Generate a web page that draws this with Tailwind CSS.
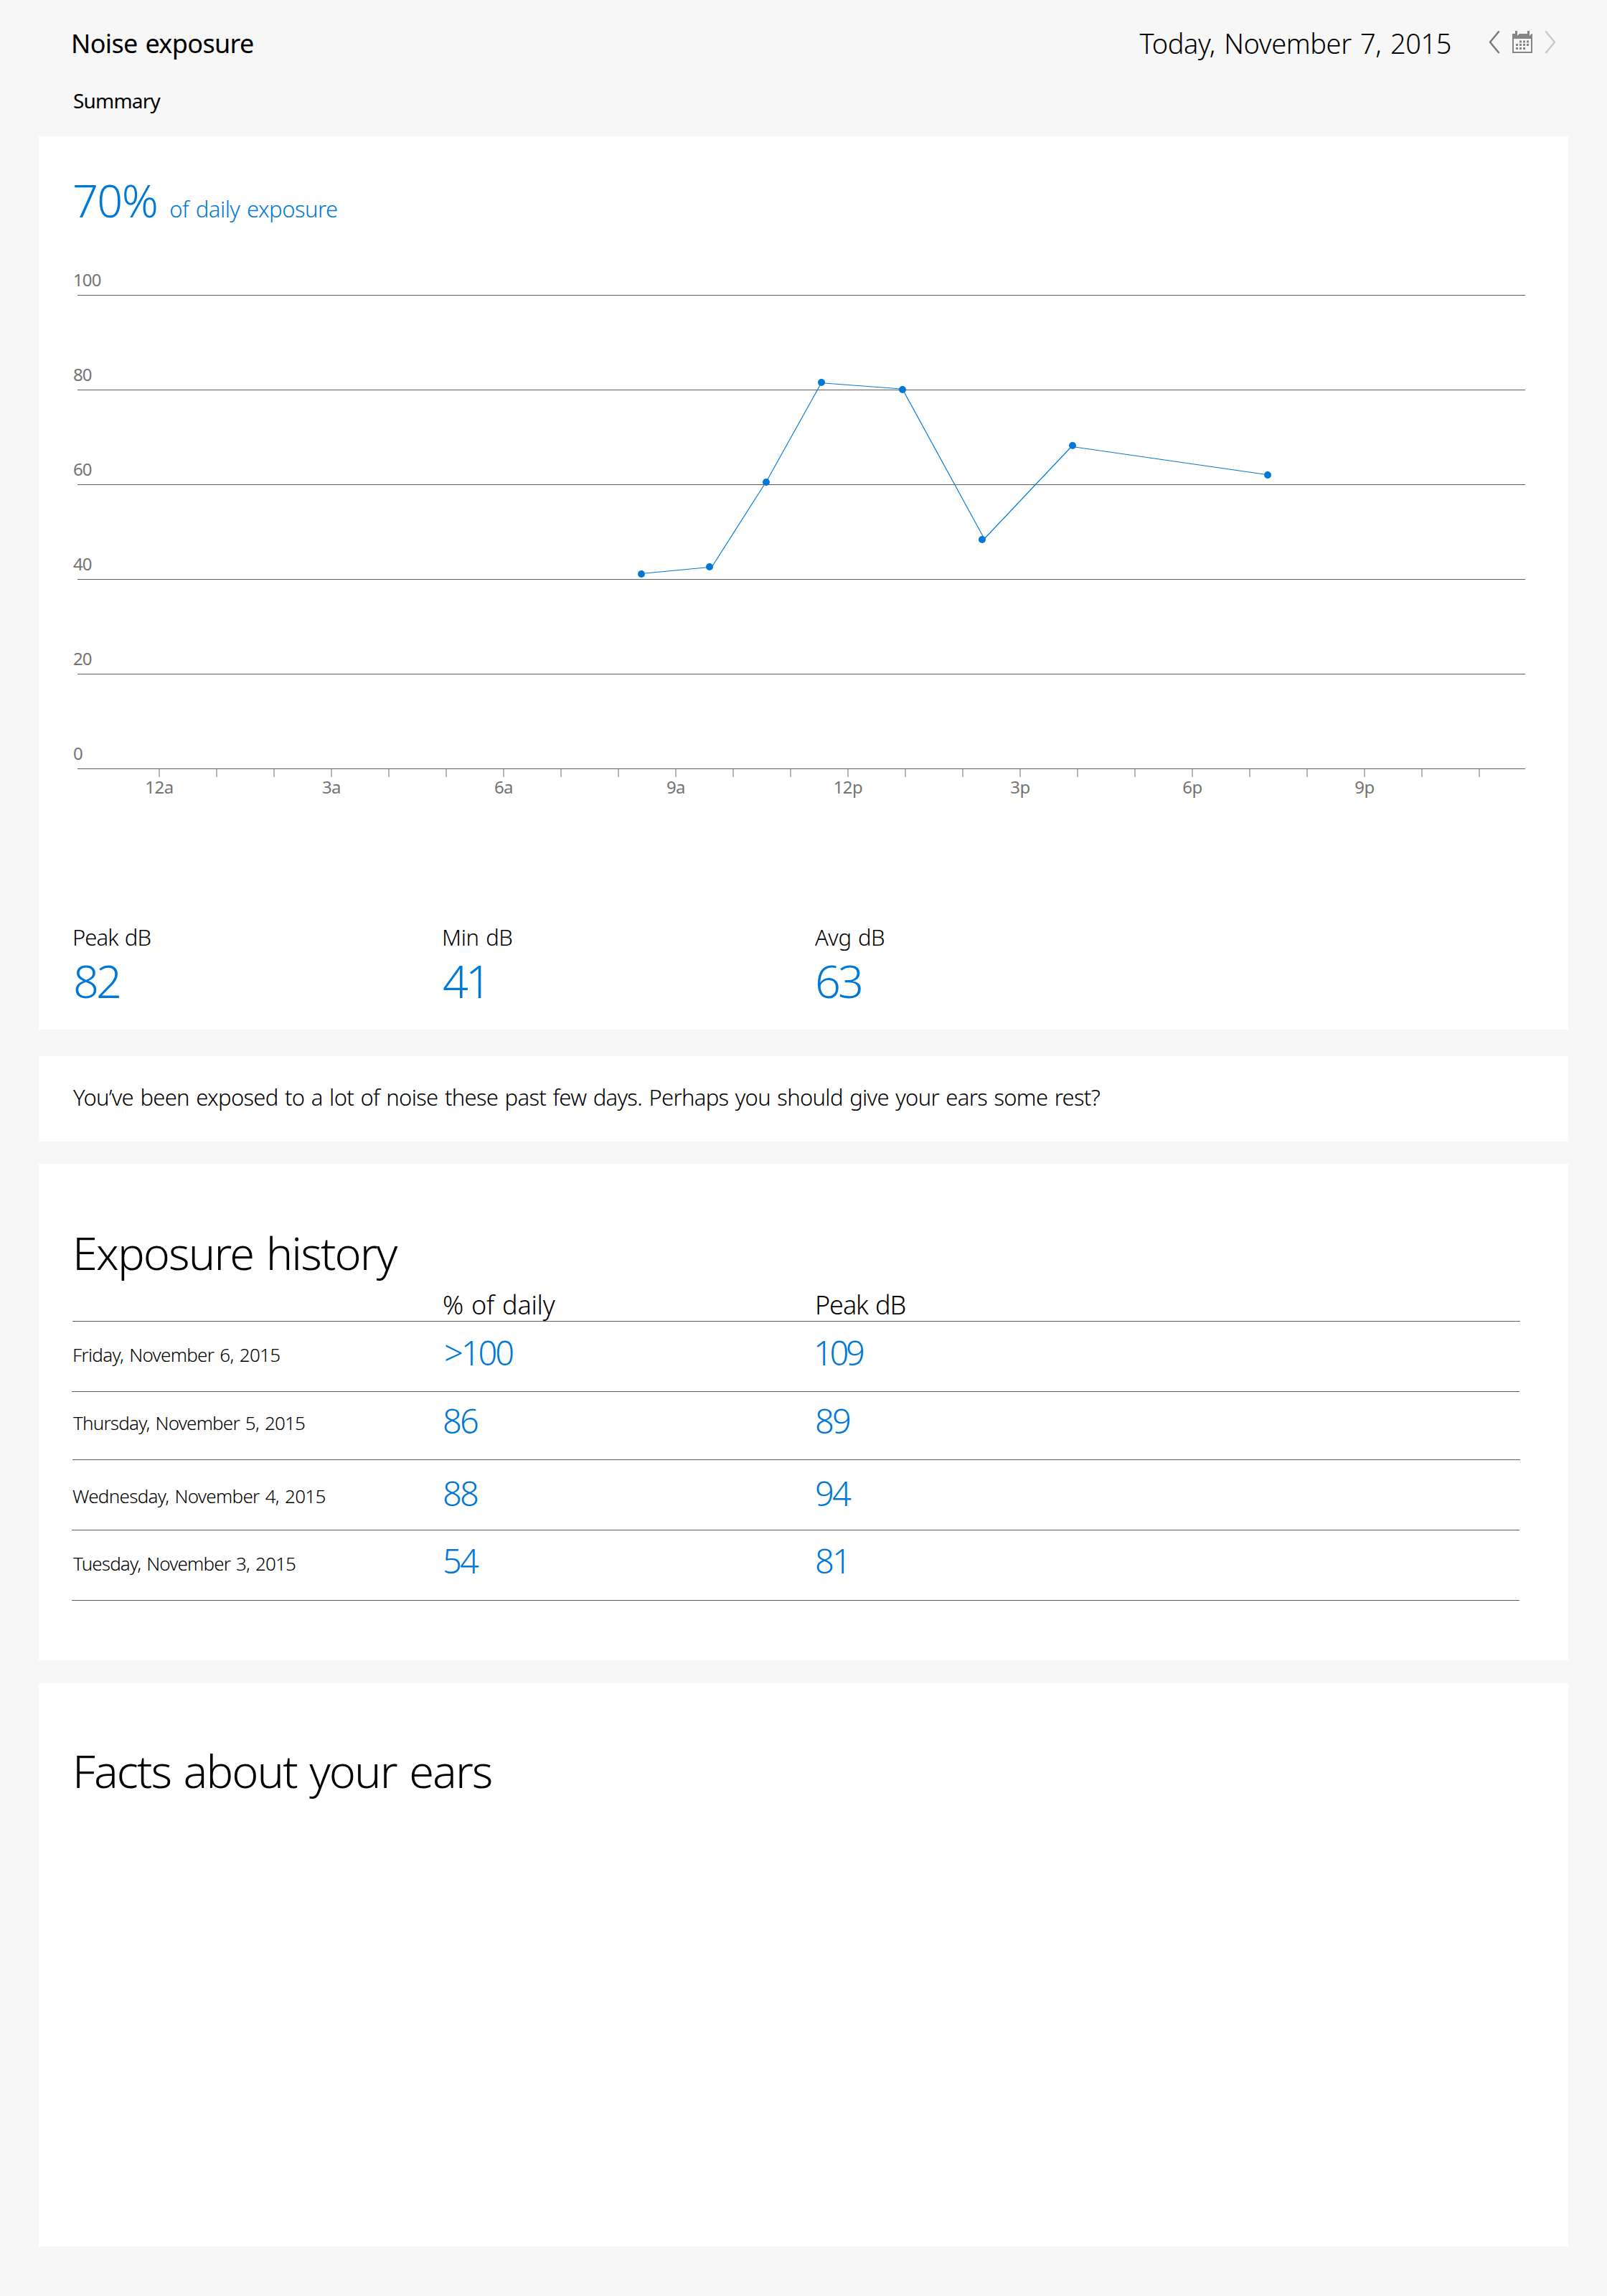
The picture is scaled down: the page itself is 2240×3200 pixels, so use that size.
<!DOCTYPE html>
<html lang="en">
<head>
<meta charset="utf-8">
<title>Noise exposure</title>
<script src="https://cdn.jsdelivr.net/npm/@tailwindcss/browser@4"></script>
</head>
<body class="min-h-[3200px] w-[2240px] bg-[#f7f7f7] px-[54px] font-['Noto_Sans','Open_Sans',sans-serif] font-light text-black">

<header class="flex h-[190px] items-start justify-between">
  <div class="pl-[45px] pt-[37px]">
    <h1 class="text-[36px] leading-[48px] font-normal tracking-[-0.65px] [word-spacing:2px]">Noise exposure</h1>
    <p class="mt-[35px] pl-[3px] text-[28px] leading-[40px] font-normal tracking-[-0.8px]">Summary</p>
  </div>
  <div class="flex items-start pr-[17px]">
    <p class="mr-[52px] pt-[36px] text-[38px] leading-[48px] tracking-[-0.44px] [word-spacing:3px]">Today, November 7, 2015</p>
    <div class="flex gap-[17px] pt-[42px]">
      <button aria-label="Previous day"><svg class="h-[34px] w-[16px]" viewBox="0 0 16 34" fill="none" stroke="#777" stroke-width="2.4"><path d="M14.6 1.5 2 16.8 14.6 32"/></svg></button>
      <button aria-label="Choose date"><svg class="h-[34px] w-[28px]" viewBox="0 0 28 34" fill="#858585"><path fill-rule="evenodd" d="M0 5h4V1h3v7l3-3h11V1h3v7l3-3h1v27H0zM2 12v18h24V12z"/><path d="M10 14.500h3v3h-3zM15 14.500h3v3h-3zM20 14.500h3v3h-3zM5 19h3v3H5zM10 19h3v3h-3zM15 19h3v3h-3zM20 19h3v3h-3zM5 24h3v3H5zM10 24h3v3h-3zM15 24h3v3h-3z"/></svg></button>
      <button aria-label="Next day"><svg class="h-[34px] w-[16px]" viewBox="0 0 16 34" fill="none" stroke="#c8c8c8" stroke-width="2.4"><path d="M1.400 1.500 14 16.800 1.400 32"/></svg></button>
    </div>
  </div>
</header>

<main>
  <section class="h-[1245px] bg-white pt-[49px]">
    <div class="flex items-baseline pl-[47px] text-[#0078d7]">
      <span class="text-[63px] leading-[80px] tracking-[-1.6px]">70%</span>
      <span class="ml-[17px] text-[31px] leading-[44px] tracking-[-0.5px] [word-spacing:2px]">of daily exposure</span>
    </div>

    <svg class="mt-[51px] block h-[750px] w-[2132px]" viewBox="0 -10 2132 750">
      <g fill="#606060" shape-rendering="crispEdges">
        <rect x="54" y="31" width="2018" height="1"/>
        <rect x="54" y="163" width="2018" height="1"/>
        <rect x="54" y="295" width="2018" height="1"/>
        <rect x="54" y="427" width="2018" height="1"/>
        <rect x="54" y="559" width="2018" height="1"/>
        <rect x="54" y="691" width="2018" height="1"/>
      </g>
      <path stroke="#a6a6a6" stroke-width="1.6" d="M168 692v11M248 692v11M328 692v11M408 692v11M488 692v11M568 692v11M648 692v11M728 692v11M808 692v11M888 692v11M968 692v11M1048 692v11M1128 692v11M1208 692v11M1288 692v11M1368 692v11M1448 692v11M1528 692v11M1608 692v11M1688 692v11M1768 692v11M1848 692v11M1928 692v11M2008 692v11"/>
      <g class="text-[24px] font-normal tracking-[-0.9px]" fill="#737373">
        <text x="48" y="19">100</text>
        <text x="48" y="151">80</text>
        <text x="48" y="283">60</text>
        <text x="48" y="415">40</text>
        <text x="48" y="547">20</text>
        <text x="48" y="679">0</text>
      </g>
      <g class="text-[24px] font-normal tracking-[-0.5px]" fill="#737373" text-anchor="middle">
        <text x="168" y="726">12a</text>
        <text x="408" y="726">3a</text>
        <text x="648" y="726">6a</text>
        <text x="888" y="726">9a</text>
        <text x="1128" y="726">12p</text>
        <text x="1368" y="726">3p</text>
        <text x="1608" y="726">6p</text>
        <text x="1848" y="726">9p</text>
      </g>
      <path fill="none" stroke="#0078d7" stroke-width="1.15" d="M845 419 935 410.500M939 409 1011 296M1016 288 1089 157M1095 154 1202 162M1206 166 1317 369M1318 371 1438 244M1444 243 1708 281"/>
      <g fill="#0078d7">
        <circle cx="840" cy="420" r="5"/>
        <circle cx="935" cy="410" r="5"/>
        <circle cx="1014" cy="292" r="5"/>
        <circle cx="1091" cy="153" r="5"/>
        <circle cx="1204" cy="163" r="5"/>
        <circle cx="1315" cy="372" r="5"/>
        <circle cx="1441" cy="241" r="5"/>
        <circle cx="1713" cy="282" r="5"/>
      </g>
    </svg>

    <dl class="mt-[165px] grid grid-cols-[515px_520px_1fr] pl-[47px]">
      <div>
        <dt class="text-[31px] leading-[43px] tracking-[-0.9px] [word-spacing:2px]">Peak dB</dt>
        <dd class="pl-px text-[63px] leading-[78px] tracking-[-4px] text-[#0078d7]">82</dd>
      </div>
      <div>
        <dt class="text-[31px] leading-[43px] tracking-[-0.4px] [word-spacing:2px]">Min dB</dt>
        <dd class="pl-px text-[63px] leading-[78px] tracking-[-4px] text-[#0078d7]">41</dd>
      </div>
      <div>
        <dt class="text-[31px] leading-[43px] tracking-[-0.5px] [word-spacing:2px]">Avg dB</dt>
        <dd class="text-[63px] leading-[78px] tracking-[-4px] text-[#0078d7]">63</dd>
      </div>
    </dl>
  </section>

  <section class="mt-[37px] h-[119px] bg-white pl-12 pt-[35px]">
    <p class="text-[31px] leading-[44px] tracking-[-0.69px] [word-spacing:2px]">You’ve been exposed to a lot of noise these past few days. Perhaps you should give your ears some rest?</p>
  </section>

  <section class="mt-[31px] h-[692px] bg-white pl-[46px] pt-[84px]">
    <h2 class="pl-px text-[63px] leading-[80px] tracking-[-1.85px] [word-spacing:3px]">Exposure history</h2>
    <div class="ml-px grid h-[56px] w-[2018px] grid-cols-[516px_519px_1fr] border-b border-[#606060] pt-[9px] text-[36px] leading-[48px]">
      <span class="col-start-2 tracking-[-0.25px] [word-spacing:2px]">% of daily</span>
      <span class="tracking-[-1.1px] [word-spacing:2px]">Peak dB</span>
    </div>
    <div class="grid h-[98px] w-[2018px] grid-cols-[517px_519px_1fr] border-b border-[#606060] pt-[13px] text-[47px] leading-[60px] tracking-[-2.8px] text-[#0078d7]">
      <span class="pl-px pt-[15px] text-[26px] leading-[37px] tracking-[-0.7px] [word-spacing:2px] text-black">Friday, November 6, 2015</span>
      <span class="pl-0.5 tracking-[-3.1px]">&gt;100</span>
      <span class="-ml-0.5 tracking-[-4.3px]">109</span>
    </div>
    <div class="ml-px grid h-[95px] w-[2018px] grid-cols-[516px_519px_1fr] border-b border-[#606060] pt-[10px] text-[47px] leading-[60px] tracking-[-2.8px] text-[#0078d7]">
      <span class="pl-px pt-[15px] text-[26px] leading-[37px] tracking-[-0.8px] [word-spacing:2px] text-black">Thursday, November 5, 2015</span>
      <span>86</span>
      <span>89</span>
    </div>
    <div class="grid h-[98px] w-[2018px] grid-cols-[517px_519px_1fr] border-b border-[#606060] pt-4 text-[47px] leading-[60px] tracking-[-2.8px] text-[#0078d7]">
      <span class="pl-px pt-4 text-[26px] leading-[37px] tracking-[-0.7px] [word-spacing:2px] text-black">Wednesday, November 4, 2015</span>
      <span>88</span>
      <span>94</span>
    </div>
    <div class="grid h-[98px] w-[2018px] grid-cols-[517px_519px_1fr] border-b border-[#606060] pt-[12px] text-[47px] leading-[60px] tracking-[-2.8px] text-[#0078d7]">
      <span class="pl-0.5 pt-4 text-[26px] leading-[37px] tracking-[-0.85px] [word-spacing:2px] text-black">Tuesday, November 3, 2015</span>
      <span>54</span>
      <span>81</span>
    </div>
  </section>

  <section class="mt-8 h-[785px] bg-white pl-[47px] pt-[82px]">
    <h2 class="text-[63px] leading-[80px] tracking-[-1.9px] [word-spacing:3px]">Facts about your ears</h2>
  </section>
</main>
</body>
</html>
